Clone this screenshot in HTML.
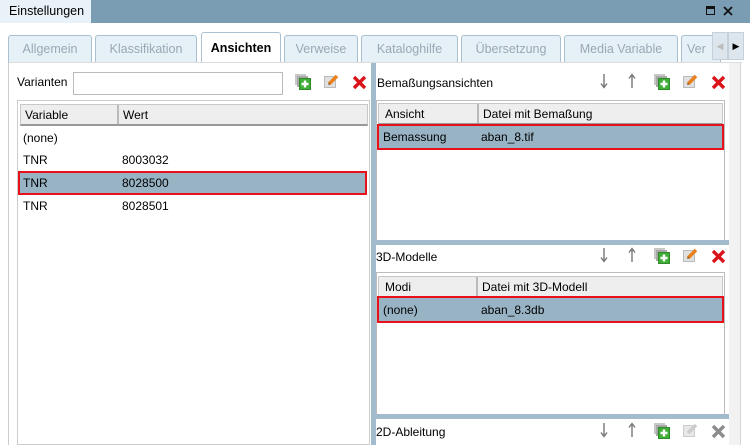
<!DOCTYPE html>
<html><head><meta charset="utf-8"><style>
*{margin:0;padding:0;box-sizing:border-box}
body{width:750px;height:445px;overflow:hidden;background:#fff;font-family:"Liberation Sans",sans-serif;font-size:12px;color:#000;position:relative}
.a{position:absolute}
.tab{position:absolute;top:35px;height:27px;border:1px solid #aac0d0;border-bottom:none;border-radius:3px 3px 0 0;background:#e6f0f7;color:#9aa8b4;text-align:center;line-height:26px;font-size:12.5px}
.hdr{position:absolute;height:22px;background:#eee;border:1px solid #c8c8c8;border-bottom:2px solid #999}
.hdr span{position:absolute;top:3px}
.hdr i{position:absolute;top:0;bottom:0;width:2px;background:#bbb}
.sel{position:absolute;background:#98b3c4;border:2px solid #e8101a}
.txt{position:absolute;white-space:nowrap}
.box{position:absolute;border:1px solid #bcbcbc;background:#fff}
</style></head><body>
<div class="a" style="left:0;top:0;width:750px;height:23px;background:#7b9db4"></div>
<div class="a" style="left:0;top:0;width:91px;height:23px;background:#e9f2f9"></div>
<div class="txt" style="left:9px;top:4px;font-size:12.5px">Einstellungen</div>
<div class="a" style="left:706px;top:6px;width:9px;height:9px;border:1.5px solid #111;border-top-width:3px"></div>
<svg class="a" style="left:723px;top:6px" width="10" height="10"><path d="M1 1l8 8M9 1L1 9" stroke="#111" stroke-width="1.8"/></svg>

<div class="tab" style="left:8px;width:84px">Allgemein</div>
<div class="tab" style="left:95px;width:102px">Klassifikation</div>
<div class="tab" style="left:201px;top:32px;height:31px;width:80px;background:#fff;color:#000;font-weight:bold;line-height:30px">Ansichten</div>
<div class="tab" style="left:284px;width:74px">Verweise</div>
<div class="tab" style="left:361px;width:97px">Kataloghilfe</div>
<div class="tab" style="left:461px;width:100px">Übersetzung</div>
<div class="tab" style="left:564px;width:114px">Media Variable</div>
<div class="tab" style="left:681px;width:40px;text-align:left;padding-left:5px">Ver</div>
<div class="a" style="left:712px;top:32px;width:16px;height:28px;background:#dde6ec;border:1px solid #c4d0da;color:#bbb;font-size:9px;line-height:26px;text-align:center">◀</div>
<div class="a" style="left:728px;top:32px;width:16px;height:28px;background:#dde6ec;border:1px solid #c4d0da;color:#000;font-size:9px;line-height:26px;text-align:center">▶</div>

<div class="a" style="left:8px;top:62px;width:1px;height:383px;background:#ccc"></div>
<div class="a" style="left:9px;top:62px;width:733px;height:1px;background:#ddd"></div>
<div class="a" style="left:729px;top:63px;width:11px;height:382px;background:#f2f2f2"></div>
<div class="a" style="left:740px;top:63px;width:1px;height:382px;background:#d6d6d6"></div>

<div class="txt" style="left:17px;top:75px">Varianten</div>
<div class="a" style="left:73px;top:72px;width:210px;height:23px;border:1px solid #bbb"></div>

<svg width="0" height="0" style="position:absolute"><defs>
<g id="add"><rect x="0" y="0" width="11" height="11" fill="#c8c8c8"/><rect x="2" y="2" width="11" height="11" fill="#a8a8a8"/><rect x="4" y="4" width="12" height="12" fill="#2f8a2a"/><rect x="5" y="5" width="10" height="10" fill="#3fae36"/><path d="M10 6.5v7M6.5 10h7" stroke="#fff" stroke-width="2.4"/></g>
<g id="ed"><rect x="1" y="4" width="12" height="12" fill="#bbb"/><rect x="2" y="5" width="10" height="10" fill="#e0e0e0"/><path d="M6 12l8-8" stroke="#e8801c" stroke-width="3.5"/><path d="M5 13l2-1-1-1z" fill="#333"/></g>
<g id="x"><path d="M2 2l11 11M13 2L2 13" stroke="#d9151b" stroke-width="3.4"/></g>
<g id="xg"><path d="M2 2l11 11M13 2L2 13" stroke="#8c8c8c" stroke-width="3.4"/></g>
<g id="eg"><rect x="1" y="4" width="12" height="12" fill="#ccc"/><rect x="2" y="5" width="10" height="10" fill="#e8e8e8"/><path d="M6 12l8-8" stroke="#ccc" stroke-width="3.5"/></g>
<g id="dn"><path d="M7 1v13M4 10.5l3 4 3-4" stroke="#777" stroke-width="1.4" fill="none"/></g>
<g id="up"><path d="M7 16V3M4 6.5l3-4 3 4" stroke="#777" stroke-width="1.4" fill="none"/></g>
</defs></svg>

<svg class="a" style="left:295px;top:74px" width="17" height="17"><use href="#add"/></svg>
<svg class="a" style="left:323px;top:72px" width="17" height="17"><use href="#ed"/></svg>
<svg class="a" style="left:352px;top:75px" width="15" height="15"><use href="#x"/></svg>

<div class="box" style="left:17px;top:100px;width:353px;height:345px;border-color:#ccc"></div>
<div class="hdr" style="left:20px;top:104px;width:348px"><span style="left:4px">Variable</span><i style="left:96px"></i><span style="left:102px">Wert</span></div>
<div class="txt" style="left:23px;top:131px">(none)</div>
<div class="txt" style="left:23px;top:153px">TNR</div><div class="txt" style="left:122px;top:153px">8003032</div>
<div class="sel" style="left:18px;top:171px;width:349px;height:24px"></div>
<div class="txt" style="left:23px;top:176px">TNR</div><div class="txt" style="left:122px;top:176px">8028500</div>
<div class="txt" style="left:23px;top:199px">TNR</div><div class="txt" style="left:122px;top:199px">8028501</div>

<div class="a" style="left:371px;top:63px;width:5px;height:382px;background:#a3bccd"></div>

<div class="txt" style="left:377px;top:76px">Bemaßungsansichten</div>
<svg class="a" style="left:597px;top:73px" width="15" height="18"><use href="#dn"/></svg>
<svg class="a" style="left:625px;top:72px" width="15" height="18"><use href="#up"/></svg>
<svg class="a" style="left:654px;top:74px" width="17" height="17"><use href="#add"/></svg>
<svg class="a" style="left:682px;top:72px" width="17" height="17"><use href="#ed"/></svg>
<svg class="a" style="left:711px;top:75px" width="15" height="15"><use href="#x"/></svg>
<div class="box" style="left:376px;top:100px;width:349px;height:141px"></div>
<div class="hdr" style="left:378px;top:103px;width:345px"><span style="left:6px">Ansicht</span><i style="left:98px"></i><span style="left:104px">Datei mit Bemaßung</span></div>
<div class="sel" style="left:377px;top:124px;width:347px;height:26px"></div>
<div class="txt" style="left:383px;top:130px">Bemassung</div><div class="txt" style="left:481px;top:130px">aban_8.tif</div>

<div class="a" style="left:376px;top:240px;width:353px;height:5px;background:#a3bccd"></div>
<div class="txt" style="left:376px;top:250px">3D-Modelle</div>
<svg class="a" style="left:597px;top:247px" width="15" height="18"><use href="#dn"/></svg>
<svg class="a" style="left:625px;top:246px" width="15" height="18"><use href="#up"/></svg>
<svg class="a" style="left:654px;top:248px" width="17" height="17"><use href="#add"/></svg>
<svg class="a" style="left:682px;top:246px" width="17" height="17"><use href="#ed"/></svg>
<svg class="a" style="left:711px;top:249px" width="15" height="15"><use href="#x"/></svg>
<div class="box" style="left:376px;top:272px;width:349px;height:143px"></div>
<div class="hdr" style="left:378px;top:276px;width:345px"><span style="left:6px">Modi</span><i style="left:97px"></i><span style="left:103px">Datei mit 3D-Modell</span></div>
<div class="sel" style="left:377px;top:296px;width:347px;height:27px"></div>
<div class="txt" style="left:383px;top:303px">(none)</div><div class="txt" style="left:481px;top:303px">aban_8.3db</div>

<div class="a" style="left:376px;top:414px;width:353px;height:5px;background:#a3bccd"></div>
<div class="txt" style="left:376px;top:425px">2D-Ableitung</div>
<svg class="a" style="left:597px;top:422px" width="15" height="18"><use href="#dn"/></svg>
<svg class="a" style="left:625px;top:421px" width="15" height="18"><use href="#up"/></svg>
<svg class="a" style="left:654px;top:423px" width="17" height="17"><use href="#add"/></svg>
<svg class="a" style="left:682px;top:421px" width="17" height="17"><use href="#eg"/></svg>
<svg class="a" style="left:711px;top:424px" width="15" height="15"><use href="#xg"/></svg>
</body></html>
